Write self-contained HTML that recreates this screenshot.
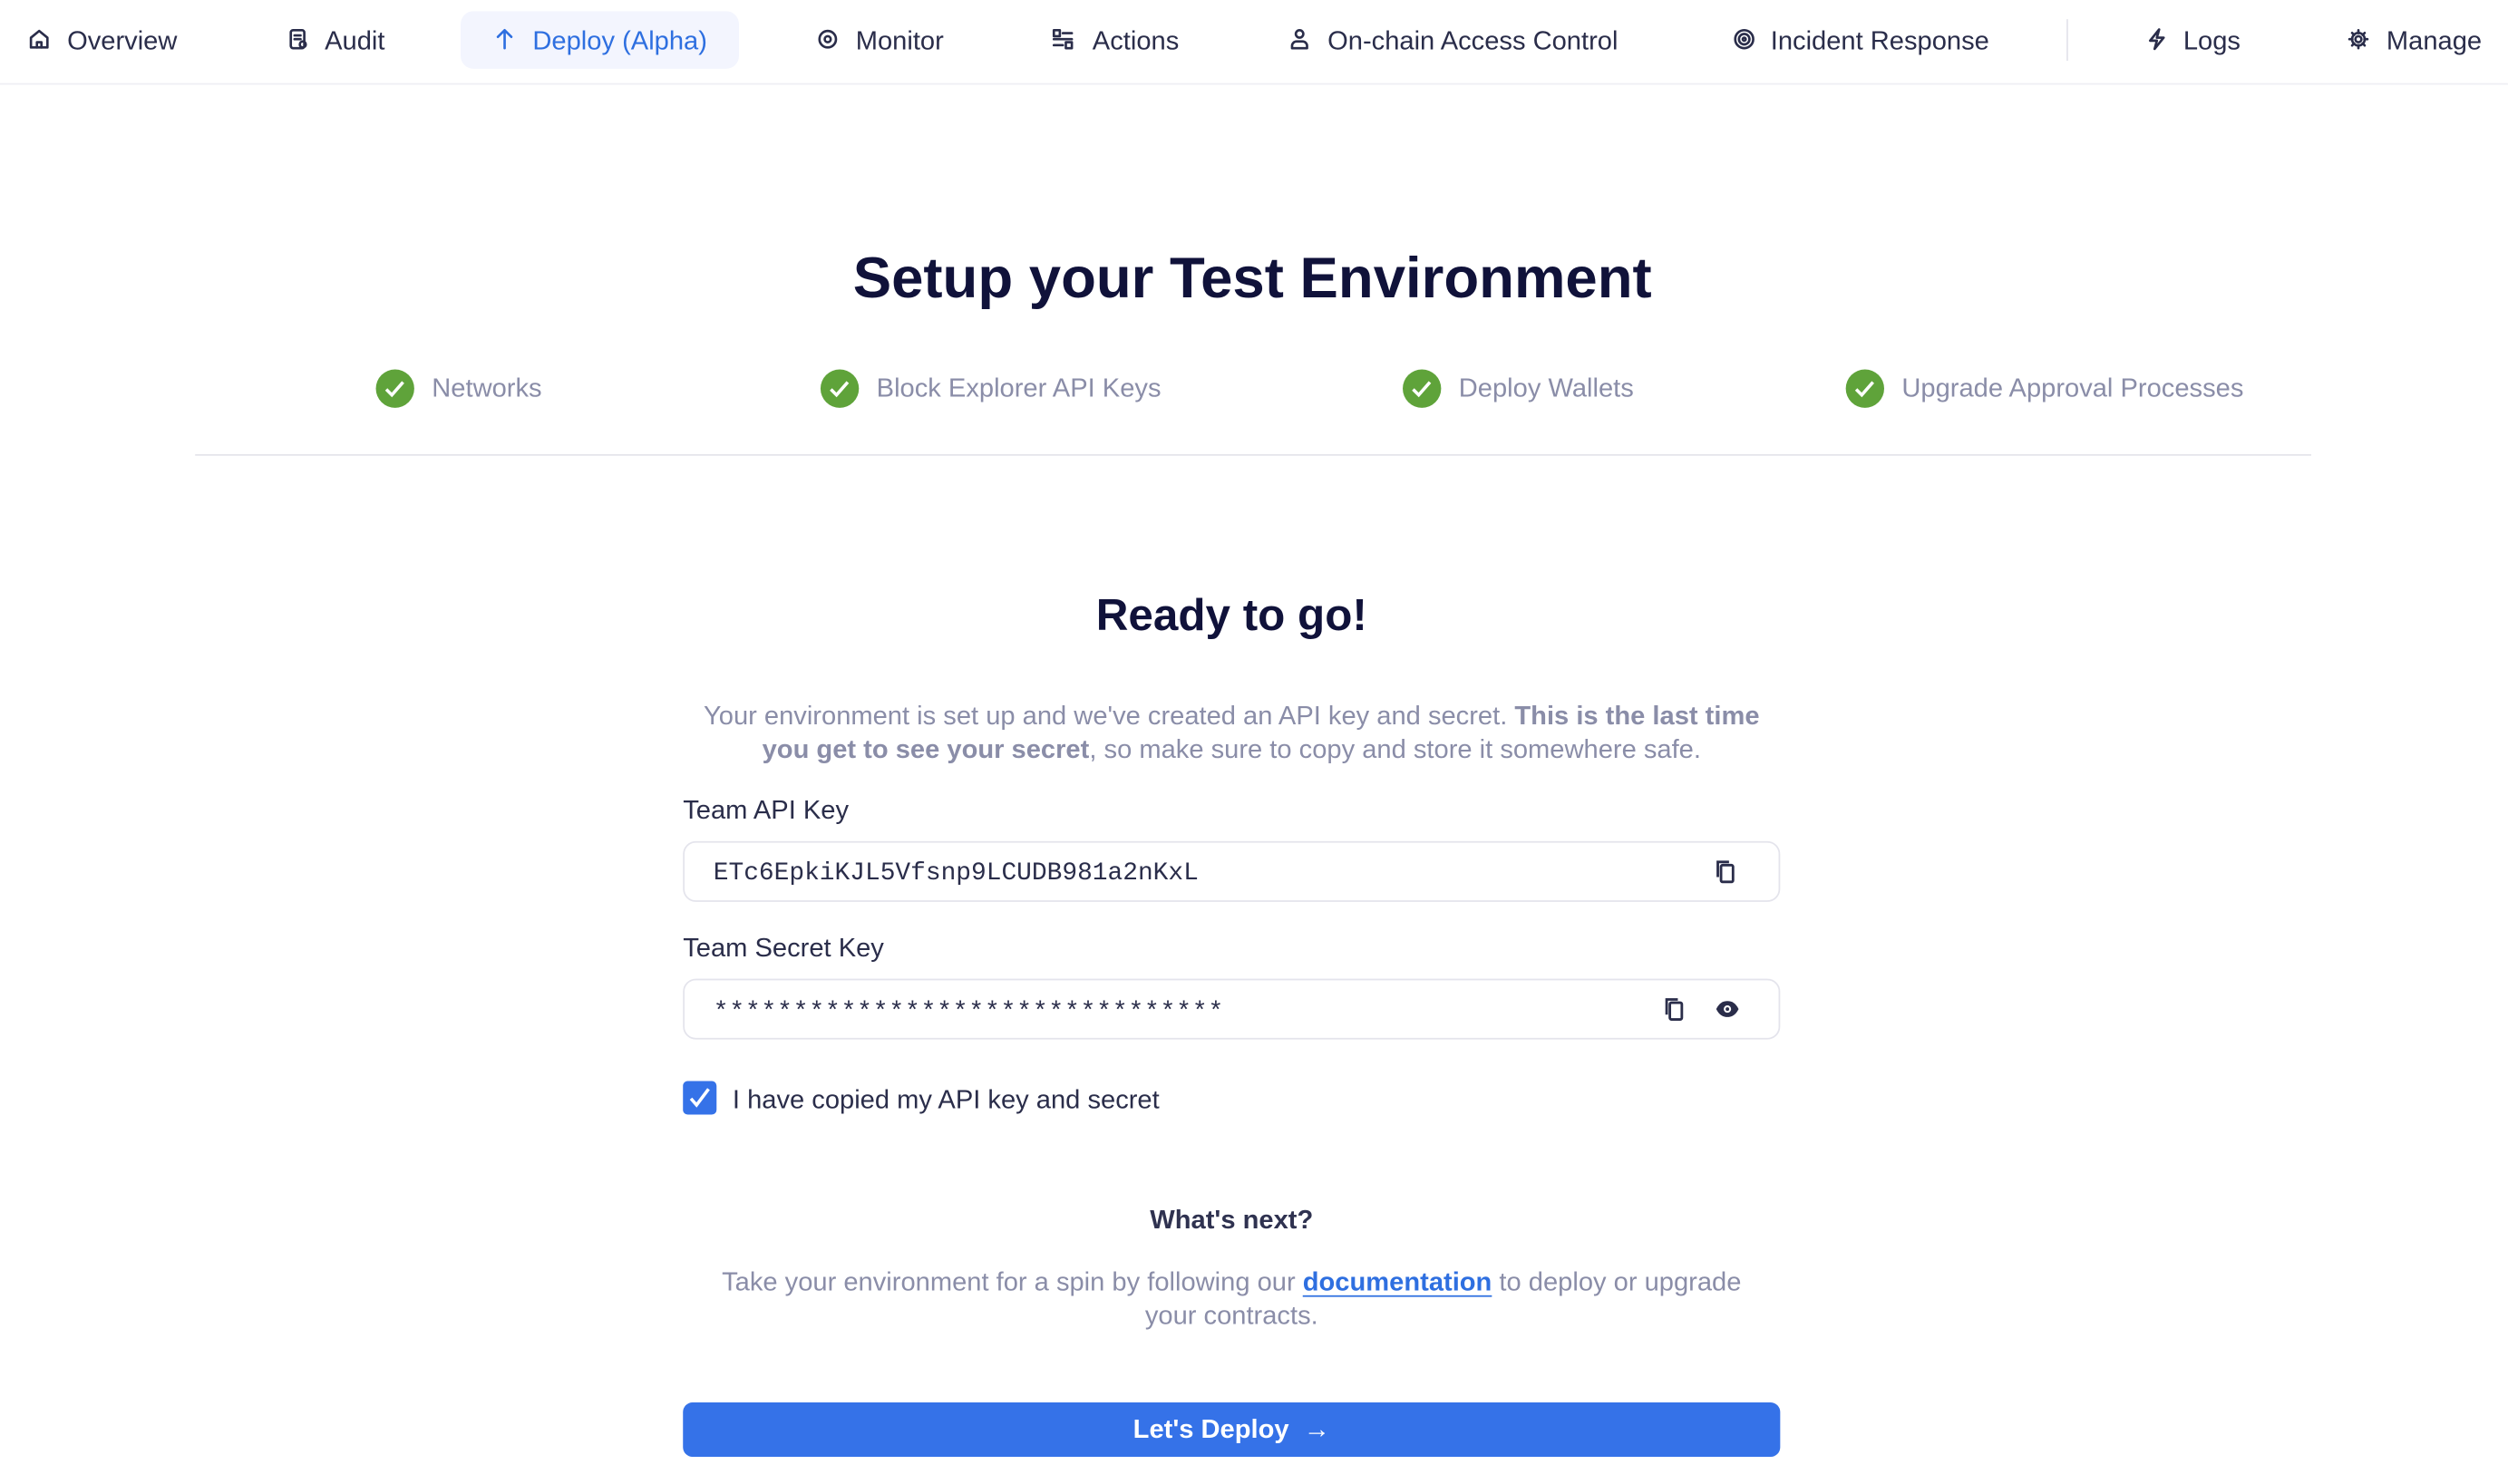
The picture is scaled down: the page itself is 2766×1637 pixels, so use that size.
<!DOCTYPE html>
<html><head><meta charset="utf-8"><style>
html,body{margin:0;padding:0;background:#fff;width:2766px;height:1636px;overflow:hidden}
#w{position:absolute;left:0;top:0;width:1568px;height:928px;transform:scale(1.764);transform-origin:0 0;font-family:"Liberation Sans",sans-serif;color:#2a2d4a}
.a{position:absolute;white-space:nowrap}
.nav{font-size:16.5px;color:#2a2d4a;top:16px;line-height:20px}
.ic{position:absolute;top:17px;width:15px;height:15px}
.ic svg{width:15px;height:15px;fill:none;stroke:#2a2d4a;stroke-width:1.6;stroke-linecap:round;stroke-linejoin:round}
.chk{position:absolute;top:231px;width:24px;height:24px;border-radius:50%;background:#5fa33a}
.chk svg{width:24px;height:24px}
.st{font-size:16.5px;color:#8a8da8;top:234px}
.gray{color:#8a8da8;font-size:16.5px;text-align:center;line-height:21px}
.inp{position:absolute;left:427px;width:684px;height:36px;border:1px solid #e4e4ec;border-radius:8px}
.mono{font-family:"Liberation Mono",monospace;font-size:15.8px;color:#2a2d4a}
.lbl{font-size:16.5px;color:#2a2d4a}
</style></head><body><div id="w">
<div class="a" style="left:288px;top:7px;width:174px;height:36px;background:#f3f5fe;border-radius:8px"></div>
<div class="ic" style="left:17px"><svg viewBox="0 0 16 16"><path d="M2.5 7L8 2.5 13.5 7V13.5H2.5Z"/><path d="M6.5 13.5V10h3v3.5"/></svg></div>
<div class="a nav" style="left:42px">Overview</div>
<div class="ic" style="left:179px"><svg viewBox="0 0 16 16"><rect x="3" y="2" width="9" height="12" rx="1.5"/><path d="M5.5 5.5h4M5.5 8h4"/><circle cx="11" cy="11.5" r="2"/></svg></div>
<div class="a nav" style="left:203px">Audit</div>
<div class="ic" style="left:308px"><svg viewBox="0 0 16 16" style="stroke:#2e6fe0"><path d="M8 14V2M3.5 6.5L8 2l4.5 4.5"/></svg></div>
<div class="a nav" style="left:333px;color:#2e6fe0">Deploy (Alpha)</div>
<div class="ic" style="left:510px"><svg viewBox="0 0 16 16"><circle cx="8" cy="8" r="5.5"/><circle cx="8" cy="8" r="2"/></svg></div>
<div class="a nav" style="left:535px">Monitor</div>
<div class="ic" style="left:657px"><svg viewBox="0 0 16 16"><rect x="2" y="2" width="4" height="4"/><rect x="10" y="10" width="4" height="4"/><path d="M8 4h6M2 12h6M2 8h12"/></svg></div>
<div class="a nav" style="left:683px">Actions</div>
<div class="ic" style="left:805px"><svg viewBox="0 0 16 16"><circle cx="8" cy="4.5" r="2.5"/><path d="M3 14v-1.5a3 3 0 013-3h4a3 3 0 013 3V14Z"/></svg></div>
<div class="a nav" style="left:830px">On-chain Access Control</div>
<div class="ic" style="left:1083px"><svg viewBox="0 0 16 16"><circle cx="8" cy="8" r="6"/><circle cx="8" cy="8" r="3.5"/><circle cx="8" cy="8" r="1"/></svg></div>
<div class="a nav" style="left:1107px">Incident Response</div>
<div class="a" style="left:1292px;top:12px;width:1px;height:26px;background:#e4e4ec"></div>
<div class="ic" style="left:1341px"><svg viewBox="0 0 16 16"><path d="M9.5 1.5L3.5 9h4.5l-1.5 5.5L12.5 7H8Z"/></svg></div>
<div class="a nav" style="left:1365px">Logs</div>
<div class="ic" style="left:1467px"><svg viewBox="0 0 16 16"><circle cx="8" cy="8" r="2"/><path d="M8 2v2M8 12v2M2 8h2M12 8h2M3.8 3.8l1.4 1.4M10.8 10.8l1.4 1.4M3.8 12.2l1.4-1.4M10.8 5.2l1.4-1.4"/><circle cx="8" cy="8" r="4.2"/></svg></div>
<div class="a nav" style="left:1492px">Manage</div>
<div class="a" style="left:0;top:52px;width:1568px;height:1px;background:#efeff4"></div>

<div class="a" style="left:0;width:1566px;top:153px;text-align:center;font-size:36px;font-weight:bold;color:#10123a">Setup your Test Environment</div>

<div class="chk" style="left:235px"><svg viewBox="0 0 24 24"><path d="M6.5 12.5l3.5 3.5 7-8" fill="none" stroke="#fff" stroke-width="2"/></svg></div>
<div class="a st" style="left:270px">Networks</div>
<div class="chk" style="left:513px"><svg viewBox="0 0 24 24"><path d="M6.5 12.5l3.5 3.5 7-8" fill="none" stroke="#fff" stroke-width="2"/></svg></div>
<div class="a st" style="left:548px">Block Explorer API Keys</div>
<div class="chk" style="left:877px"><svg viewBox="0 0 24 24"><path d="M6.5 12.5l3.5 3.5 7-8" fill="none" stroke="#fff" stroke-width="2"/></svg></div>
<div class="a st" style="left:912px">Deploy Wallets</div>
<div class="chk" style="left:1154px"><svg viewBox="0 0 24 24"><path d="M6.5 12.5l3.5 3.5 7-8" fill="none" stroke="#fff" stroke-width="2"/></svg></div>
<div class="a st" style="left:1189px">Upgrade Approval Processes</div>
<div class="a" style="left:122px;top:284px;width:1323px;height:1px;background:#e4e4ea"></div>

<div class="a" style="left:427px;width:686px;top:369px;text-align:center;font-size:28px;font-weight:bold;color:#10123a">Ready to go!</div>
<div class="a gray" style="left:400px;width:740px;top:438px">Your environment is set up and we've created an API key and secret. <b>This is the last time</b><br><b>you get to see your secret</b>, so make sure to copy and store it somewhere safe.</div>

<div class="a lbl" style="left:427px;top:498px">Team API Key</div>
<div class="inp" style="top:526px"></div>
<div class="a mono" style="left:446px;top:537px">ETc6EpkiKJL5Vfsnp9LCUDB981a2nKxL</div>
<svg class="a" style="left:1072px;top:537px" width="15" height="16" viewBox="0 0 15 16" fill="none" stroke="#2a2d4a" stroke-width="1.6"><rect x="4" y="4" width="7.5" height="10.5" rx="1"/><path d="M2 11.5V2h7"/></svg>

<div class="a lbl" style="left:427px;top:584px">Team Secret Key</div>
<div class="inp" style="top:612px"></div>
<div class="a mono" style="left:446px;top:624px;letter-spacing:0.5px">********************************</div>
<svg class="a" style="left:1040px;top:623px" width="15" height="16" viewBox="0 0 15 16" fill="none" stroke="#2a2d4a" stroke-width="1.6"><rect x="4" y="4" width="7.5" height="10.5" rx="1"/><path d="M2 11.5V2h7"/></svg>
<svg class="a" style="left:1072px;top:625px" width="16" height="12" viewBox="0 0 16 12"><path d="M1 6C3 2 5.5 1 8 1s5 1 7 5c-2 4-4.5 5-7 5S3 10 1 6Z" fill="#2a2d4a"/><circle cx="8" cy="6" r="2.3" fill="#fff"/><circle cx="8" cy="6" r="1.1" fill="#2a2d4a"/></svg>

<div class="a" style="left:427px;top:676px;width:21px;height:21px;border-radius:3px;background:#3572e8"><svg width="21" height="21" viewBox="0 0 21 21"><path d="M5 11l3.5 4L16 5" fill="none" stroke="#fff" stroke-width="2"/></svg></div>
<div class="a lbl" style="left:458px;top:679px">I have copied my API key and secret</div>

<div class="a" style="left:427px;width:686px;top:754px;text-align:center;font-size:16.5px;font-weight:bold;color:#2f3250">What's next?</div>
<div class="a gray" style="left:400px;width:740px;top:792px">Take your environment for a spin by following our <b style="color:#2e6fe0;text-decoration:underline;text-underline-offset:3px">documentation</b> to deploy or upgrade<br>your contracts.</div>

<div class="a" style="left:427px;top:877px;width:686px;height:34px;border-radius:6px;background:#3572e8;color:#fff;font-weight:bold;font-size:16.5px;text-align:center;line-height:34px">Let's Deploy &nbsp;→</div>
</div></body></html>
